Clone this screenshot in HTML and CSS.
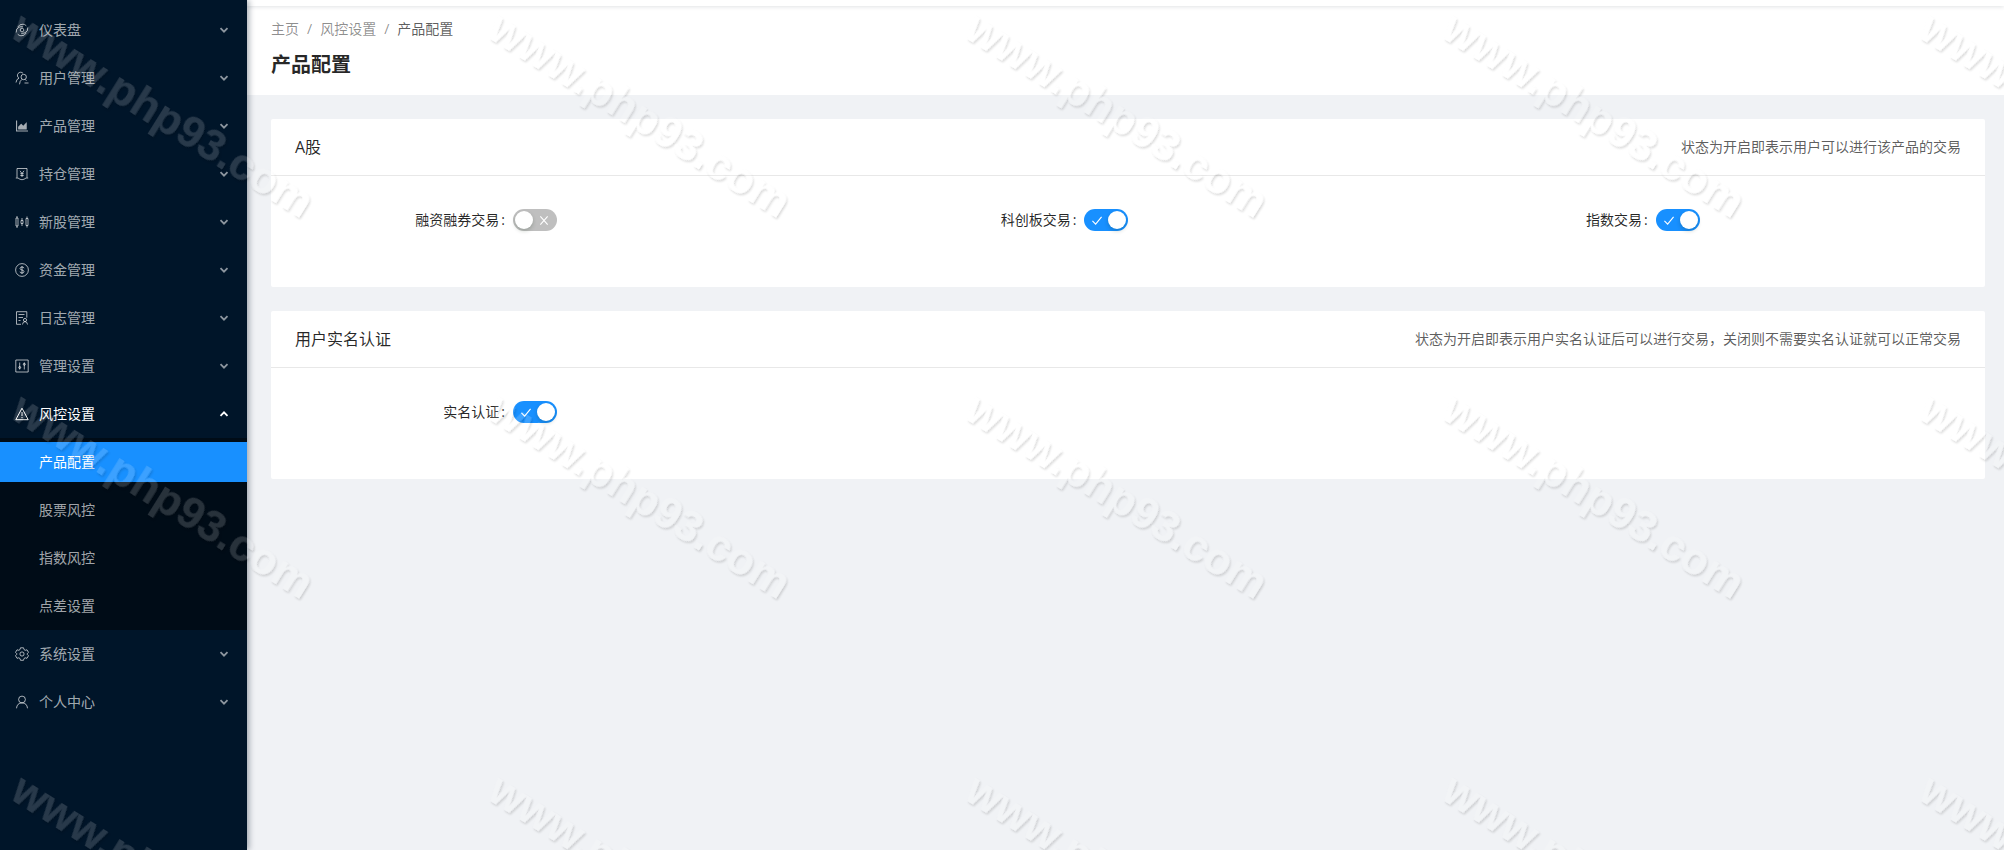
FILE: index.html
```html
<!DOCTYPE html>
<html lang="zh-CN">
<head>
    <meta charset="UTF-8">
    <title>产品配置</title>
    <meta name="viewport" content="width=device-width, initial-scale=1">
    <link rel="stylesheet" href="styles.css">
</head>
<body>
    <!-- Iconos compartidos -->
    <svg class="defs" aria-hidden="true">
        <symbol id="arrow" viewBox="0 0 10 10"><path d="M1.500 3.200 5 6.700l3.500-3.500" fill="none" stroke="currentColor" stroke-width="1.800"/></symbol>
        <symbol id="check" viewBox="0 0 12 12"><path d="M1 6.500 4.500 10 11 2" fill="none" stroke="currentColor" stroke-width="1.200"/></symbol>
        <symbol id="cross" viewBox="0 0 12 12"><path d="m2 1.500 8 9M10 1.500l-8 9" fill="none" stroke="currentColor" stroke-width="1.200"/></symbol>
        <filter id="emboss" x="-5%" y="-80%" width="110%" height="260%">
            <feOffset in="SourceAlpha" dx="2" dy="1" result="moved"/>
            <feGaussianBlur in="moved" stdDeviation="1" result="soft"/>
            <feComposite in="soft" in2="SourceAlpha" operator="out" result="edge"/>
            <feComponentTransfer in="edge" result="shadow"><feFuncA type="linear" slope="0.15"/></feComponentTransfer>
            <feComponentTransfer in="SourceGraphic" result="fill"><feFuncA type="linear" slope="0.16"/></feComponentTransfer>
            <feMerge><feMergeNode in="shadow"/><feMergeNode in="fill"/></feMerge>
        </filter>
    </svg>

    <div class="layout">
        <nav class="sidebar">
            <ul class="menu">
                <li><a href="#" class="menu-item">
                    <svg class="icon" viewBox="0 0 14 14"><circle cx="7" cy="7" r="1.800"/><path d="M2.600 4.200Q4.500 1 8 1.200q2 .1 3.300 1.600M11.400 9.800Q9.500 13 6 12.800q-2-.1-3.300-1.600M1.200 9.500Q.800 5.500 4 4.200q2-.8 4-.4M12.800 4.500q.4 4-2.800 5.300-2 .8-4 .4"/></svg>
                    仪表盘<svg class="arrow"><use href="#arrow"/></svg></a></li>
                <li><a href="#" class="menu-item">
                    <svg class="icon" viewBox="0 0 14 14"><path d="M4 7.200a3.200 3.200 0 1 1 4-4.900M4 7.200Q1.300 8 1 11.500"/><circle cx="8.700" cy="6" r="2.700"/><path d="M7 8.400Q4.700 9.600 4.500 13.300M10 8.300l1.500 1.500M9.500 12H13.500"/></svg>
                    用户管理<svg class="arrow"><use href="#arrow"/></svg></a></li>
                <li><a href="#" class="menu-item">
                    <svg class="icon solid" viewBox="64 64 896 896"><path d="M888 792H200V168c0-4-4-8-8-8h-56c-4 0-8 4-8 8v688c0 4 4 8 8 8h752c4 0 8-4 8-8v-56c0-4-4-8-8-8zM272 728h536c4 0 8-4 8-8V284c0-7-9-11-14-6L592 489 467 365a8 8 0 0 0-12 0L266 554a8 8 0 0 0-2 6v160c0 4 4 8 8 8z"/></svg>
                    产品管理<svg class="arrow"><use href="#arrow"/></svg></a></li>
                <li><a href="#" class="menu-item">
                    <svg class="icon" viewBox="0 0 14 14"><path d="M2 10.700V1.500h10v9.200M.800 11h2.200Q5 12.700 7 12.700t4-1.700h2.200M5 3.800l2 2.700 2-2.700M7 6.500V10M5.300 6.700h3.400M5.300 8.500h3.400"/></svg>
                    持仓管理<svg class="arrow"><use href="#arrow"/></svg></a></li>
                <li><a href="#" class="menu-item">
                    <svg class="icon" viewBox="0 0 14 14"><path d="M1 3h2v8H1zM2 1v2M2 11v2M6 5.500h2v3H6zM7 3v2.500M7 8.500V11M11 3.500h2v7h-2zM12 1.500v2M12 10.500v2"/></svg>
                    新股管理<svg class="arrow"><use href="#arrow"/></svg></a></li>
                <li><a href="#" class="menu-item">
                    <svg class="icon" viewBox="0 0 14 14"><circle cx="7" cy="7" r="6.400"/><path d="M9 5.200Q8.700 4 7 4T5 5.400q0 1.200 2 1.600t2 1.600Q9 10 7 10T5 8.700M7 3v8"/></svg>
                    资金管理<svg class="arrow"><use href="#arrow"/></svg></a></li>
                <li><a href="#" class="menu-item">
                    <svg class="icon" viewBox="0 0 14 14"><path d="M6 13.300H1.500V.700h10.300v6M3.500 3.500h6M3.500 6.500h4.500M3.500 9.500h2"/><circle cx="10" cy="9" r="1.600"/><path d="M7.500 13.500q.2-2.700 2.500-2.900 2.300.2 2.500 2.900"/></svg>
                    日志管理<svg class="arrow"><use href="#arrow"/></svg></a></li>
                <li><a href="#" class="menu-item">
                    <svg class="icon" viewBox="0 0 14 14"><path d="M.800 1h12.400v12H.800zM4.700 3.500v7M9.300 3.500v7"/><circle cx="4.700" cy="8.500" r="1"/><circle cx="9.300" cy="5.300" r="1"/></svg>
                    管理设置<svg class="arrow"><use href="#arrow"/></svg></a></li>
                <li><a href="#" class="menu-item open">
                    <svg class="icon" viewBox="0 0 14 14"><path d="M7 1.200 13.200 12.700H.800zM7 5v4M7 10v1.200"/></svg>
                    风控设置<svg class="arrow"><use href="#arrow"/></svg></a>
                    <ul class="submenu">
                        <li><a href="#" class="menu-item active">产品配置</a></li>
                        <li><a href="#" class="menu-item">股票风控</a></li>
                        <li><a href="#" class="menu-item">指数风控</a></li>
                        <li><a href="#" class="menu-item">点差设置</a></li>
                    </ul>
                </li>
                <li><a href="#" class="menu-item">
                    <svg class="icon" viewBox="0 0 14 14"><path d="M5.500.8h3l.5 1.800 1.200.7 1.800-.5 1.500 2.600L12.200 6.700v.6l1.300 1.400-1.500 2.600-1.800-.5-1.200.7-.5 1.800h-3L5 11.500l-1.200-.7-1.800.5L.5 8.700l1.300-1.400v-.6L.5 5.400 2 2.800l1.800.5L5 2.600z"/><circle cx="7" cy="7" r="2.100"/></svg>
                    系统设置<svg class="arrow"><use href="#arrow"/></svg></a></li>
                <li><a href="#" class="menu-item">
                    <svg class="icon" viewBox="0 0 14 14"><circle cx="7" cy="4.500" r="3.400"/><path d="M1.500 13.300Q2 8 7 7.900 12 8 12.500 13.300"/></svg>
                    个人中心<svg class="arrow"><use href="#arrow"/></svg></a></li>
            </ul>
        </nav>

        <main class="main">
            <div class="topbar"></div>
            <header class="page-header">
                <nav class="breadcrumb">
                    <a href="#">主页</a><span class="separator">/</span><a href="#">风控设置</a><span class="separator">/</span><span class="current">产品配置</span>
                </nav>
                <h1 class="page-title">产品配置</h1>
            </header>

            <div class="content">
                <section class="card">
                    <div class="card-head">
                        <h2>A股</h2>
                        <span class="extra">状态为开启即表示用户可以进行该产品的交易</span>
                    </div>
                    <div class="card-body">
                        <div class="form-item">
                            <label for="margin">融资融券交易<span class="colon">:</span></label>
                            <span class="switch"><input type="checkbox" id="margin"><svg class="off"><use href="#cross"/></svg><svg class="on"><use href="#check"/></svg></span>
                        </div>
                        <div class="form-item">
                            <label for="star">科创板交易<span class="colon">:</span></label>
                            <span class="switch"><input type="checkbox" id="star" checked><svg class="off"><use href="#cross"/></svg><svg class="on"><use href="#check"/></svg></span>
                        </div>
                        <div class="form-item">
                            <label for="index">指数交易<span class="colon">:</span></label>
                            <span class="switch"><input type="checkbox" id="index" checked><svg class="off"><use href="#cross"/></svg><svg class="on"><use href="#check"/></svg></span>
                        </div>
                    </div>
                </section>

                <section class="card">
                    <div class="card-head">
                        <h2>用户实名认证</h2>
                        <span class="extra">状态为开启即表示用户实名认证后可以进行交易，关闭则不需要实名认证就可以正常交易</span>
                    </div>
                    <div class="card-body">
                        <div class="form-item">
                            <label for="realname">实名认证<span class="colon">:</span></label>
                            <span class="switch"><input type="checkbox" id="realname" checked><svg class="off"><use href="#cross"/></svg><svg class="on"><use href="#check"/></svg></span>
                        </div>
                    </div>
                </section>
            </div>
        </main>
    </div>

    <!-- Marca de agua repetida -->
    <div class="watermark" aria-hidden="true">
        <span>www.php93.com</span><span>www.php93.com</span><span>www.php93.com</span><span>www.php93.com</span><span>www.php93.com</span>
        <span>www.php93.com</span><span>www.php93.com</span><span>www.php93.com</span><span>www.php93.com</span><span>www.php93.com</span>
        <span>www.php93.com</span><span>www.php93.com</span><span>www.php93.com</span><span>www.php93.com</span><span>www.php93.com</span>
    </div>
</body>
</html>
```
FILE: styles.css
```css
* {
    box-sizing: border-box;
}
body {
    margin: 0;
    font-family: "Open Sans", "Noto Sans CJK SC", sans-serif;
    font-size: 14px;
    line-height: 22px;
    color: rgba(0, 0, 0, 0.85);
    background: #f0f2f5;
}
a {
    color: inherit;
    text-decoration: none;
}
ul {
    list-style: none;
    margin: 0;
    padding: 0;
}
.defs {
    position: absolute;
    width: 0;
    height: 0;
}
.layout {
    display: flex;
    min-height: 100vh;
}

/* Menú lateral */
.sidebar {
    flex: 0 0 247px;
    padding-top: 6px;
    background: #001529;
    box-shadow: 2px 0 6px rgba(0, 21, 41, 0.35);
    z-index: 1;
}
.menu li {
    padding: 4px 0;
}
.menu-item {
    display: flex;
    align-items: center;
    height: 40px;
    padding: 0 18px 0 15px;
    color: rgba(255, 255, 255, 0.65);
}
.menu-item.open,
.menu-item.active {
    color: #fff;
}
.icon {
    width: 14px;
    height: 14px;
    margin-right: 10px;
    fill: none;
    stroke: currentColor;
}
.icon.solid {
    fill: currentColor;
    stroke: none;
}
.arrow {
    width: 10px;
    height: 10px;
    margin-left: auto;
    opacity: 0.85;
}
.open .arrow {
    transform: rotate(180deg);
    opacity: 1;
}
.submenu {
    margin: 4px 0 -4px;
    background: #000c17;
}
.submenu .menu-item {
    padding-left: 39px;
}
.submenu .active {
    background: #1890ff;
}

/* Cabecera */
.main {
    flex: 1;
    min-width: 0;
}
.topbar {
    position: relative;
    height: 6px;
    background: #fff;
    box-shadow: 0 1px 4px rgba(0, 21, 41, 0.12);
}
.page-header {
    padding: 12px 24px 14px;
    background: #fff;
}
.breadcrumb {
    color: rgba(0, 0, 0, 0.45);
}
.separator {
    margin: 0 8px;
}
.current {
    color: rgba(0, 0, 0, 0.65);
}
.page-title {
    margin: 9px 0 0;
    font-size: 20px;
    line-height: 32px;
}

/* Tarjetas */
.content {
    display: grid;
    gap: 24px;
    padding: 24px 19px 24px 24px;
}
.card {
    background: #fff;
    border-radius: 2px;
}
.card-head {
    display: flex;
    align-items: center;
    justify-content: space-between;
    height: 57px;
    padding: 0 24px;
    border-bottom: 1px solid #e8e8e8;
}
.card-head h2 {
    margin: 0;
    font-size: 16px;
    font-weight: 400;
}
.extra {
    color: rgba(0, 0, 0, 0.65);
}
.card-body {
    display: grid;
    grid-template-columns: repeat(3, 1fr);
    padding: 24px 0 47px;
}
.form-item {
    display: grid;
    grid-template-columns: 5fr 7fr;
    align-items: center;
    height: 40px;
    padding: 0 24px;
}
.form-item label {
    text-align: right;
}
.colon {
    margin: 0 8px 0 2px;
}
.switch {
    position: relative;
    width: 44px;
    height: 22px;
    color: #fff;
}
.switch input {
    appearance: none;
    display: block;
    width: 44px;
    height: 22px;
    margin: 0;
    padding: 2px;
    border-radius: 11px;
    background: #bfbfbf;
    cursor: pointer;
}
.switch input::before {
    content: "";
    display: block;
    width: 18px;
    height: 18px;
    border-radius: 9px;
    background: #fff;
    box-shadow: 0 2px 4px rgba(0, 35, 11, 0.2);
}
.switch input:checked {
    background: #1890ff;
}
.switch input:checked::before {
    margin-left: auto;
}
.switch svg {
    position: absolute;
    top: 6px;
    width: 12px;
    height: 11px;
    pointer-events: none;
}
.off {
    right: 7px;
}
.on {
    left: 7px;
}
.switch input:checked ~ .off,
.switch input:not(:checked) ~ .on {
    display: none;
}

/* Marca de agua */
.watermark {
    position: fixed;
    inset: 0;
    z-index: 2;
    display: grid;
    grid-template-columns: repeat(5, 477px);
    grid-auto-rows: 381px;
    align-content: start;
    overflow: hidden;
    pointer-events: none;
}
.watermark span {
    height: 22px;
    padding-left: 26px;
    font-family: "Liberation Sans", sans-serif;
    font-size: 44px;
    font-weight: 700;
    line-height: 22px;
    color: #fff;
    transform: rotate(32deg);
    transform-origin: 0 0;
    filter: url(#emboss);
}
```
